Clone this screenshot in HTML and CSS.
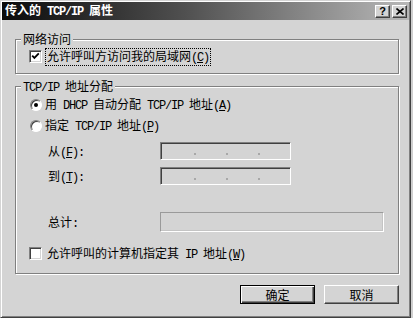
FILE: index.html
```html
<!DOCTYPE html>
<html>
<head>
    <title>传入的 TCP/IP 属性</title>
    <link rel="stylesheet" href="styles.css">
</head>
<body>
    <div class="window">
        <div class="titlebar">
            <span class="title">传入的<span class="m"> TCP/IP </span>属性</span>
            <div class="tbtns">
                <span class="tbtn">?</span>
                <span class="tbtn close">
                    <svg width="8" height="7" viewBox="0 0 8 7"><path d="M0.5 0.5 L7.5 6.5 M7.5 0.5 L0.5 6.5" stroke="#000" stroke-width="1.6"/></svg>
                </span>
            </div>
        </div>

        <div class="content">
            <div class="group" id="access">
                <span class="legend">网络访问</span>
                <div class="row">
                    <span class="check">
                        <svg width="9" height="9" viewBox="0 0 9 9"><path d="M1.2 3.6 L3.4 5.9 L7.8 1.4" stroke="#000" stroke-width="1.8" fill="none"/></svg>
                    </span>
                    <span class="label focus">允许呼叫方访问我的局域网<span class="m">(<u>C</u>)</span></span>
                </div>
            </div>

            <div class="group" id="assign">
                <span class="legend"><span class="m">TCP/IP </span>地址分配</span>
                <div class="row">
                    <span class="radio on"></span>
                    <span class="label">用<span class="m"> DHCP </span>自动分配<span class="m"> TCP/IP </span>地址<span class="m">(<u>A</u>)</span></span>
                </div>
                <div class="row" id="r2">
                    <span class="radio"></span>
                    <span class="label">指定<span class="m"> TCP/IP </span>地址<span class="m">(<u>P</u>)</span></span>
                </div>
                <div class="frow" id="from">
                    <span class="flabel">从<span class="m">(<u>F</u>):</span></span>
                    <div class="ip"><i></i><i></i><i></i></div>
                </div>
                <div class="frow" id="to">
                    <span class="flabel">到<span class="m">(<u>T</u>):</span></span>
                    <div class="ip"><i></i><i></i><i></i></div>
                </div>
                <div class="frow" id="total">
                    <span class="flabel">总计<span class="m">:</span></span>
                    <div class="sum"></div>
                </div>
                <div class="row" id="c2">
                    <span class="check"></span>
                    <span class="label">允许呼叫的计算机指定其<span class="m"> IP </span>地址<span class="m">(<u>W</u>)</span></span>
                </div>
            </div>

            <div class="buttons">
                <button class="btn default">确定</button>
                <button class="btn">取消</button>
            </div>
        </div>
    </div>
</body>
</html>
```

FILE: styles.css
```css
body {
    margin: 0;
    background-color: #cfcfcf;
    font-family: "Noto Sans CJK SC", sans-serif;
    font-size: 12px;
    color: #000;
}

/* half-width latin, like the dialog's bitmap font */
.m {
    font-family: "Liberation Mono", monospace;
    font-size: 12px;
    letter-spacing: -1.2px;
}

.window {
    width: 411px;
    height: 318px;
    box-sizing: border-box;
    background-color: #d4d4d4;
    border: 1px solid;
    border-color: #d4d4d4 #404040 #404040 #d4d4d4;
    box-shadow: inset 1px 1px #fff, inset -1px -1px #808080;
    padding: 1px;
    display: flex;
    flex-direction: column;
}

.titlebar {
    height: 18px;
    display: flex;
    align-items: center;
    justify-content: space-between;
    padding: 0 2px 0 3px;
    background: linear-gradient(to right, #0a0a0a, #505050 45%, #b8b8b8);
    color: #fff;
    font-weight: bold;
    line-height: 13px;
}

.title .m {
    font-weight: bold;
}

.tbtns {
    display: flex;
    gap: 2px;
}

.tbtn {
    width: 15px;
    height: 13px;
    box-sizing: border-box;
    background-color: #d4d4d4;
    border: 1px solid;
    border-color: #fff #404040 #404040 #fff;
    box-shadow: inset -1px -1px #808080;
    color: #000;
    font-family: "Liberation Sans", sans-serif;
    font-size: 11px;
    font-weight: bold;
    line-height: 11px;
    text-align: center;
    display: flex;
    align-items: center;
    justify-content: center;
}

.content {
    padding: 0 10px 0 13px;
    display: flex;
    flex-direction: column;
}

.group {
    position: relative;
    border: 1px solid #808080;
    box-shadow: inset 1px 1px #fff, 1px 1px #fff;
    padding-left: 13px;
}

.legend {
    position: absolute;
    top: -8px;
    left: 5px;
    padding: 0 2px;
    background-color: #d4d4d4;
    line-height: 14px;
}

#access {
    margin-top: 19px;
    padding-top: 10px;
    padding-bottom: 10px;
}

#assign {
    margin-top: 12px;
    padding-top: 11px;
    padding-bottom: 13px;
}

.row {
    display: flex;
    align-items: center;
    height: 13px;
    line-height: 13px;
}

#r2 {
    margin-top: 8px;
}

#c2 {
    margin-top: 15px;
}

.label {
    margin-left: 5px;
    white-space: nowrap;
}

.focus {
    outline: 1px dotted #000;
    outline-offset: 0;
    padding: 0 1px;
    margin-left: 4px;
}

.check {
    width: 13px;
    height: 13px;
    box-sizing: border-box;
    background-color: #fff;
    border: 1px solid;
    border-color: #808080 #fff #fff #808080;
    box-shadow: inset 1px 1px #404040, inset -1px -1px #d4d4d4;
    display: flex;
    align-items: center;
    justify-content: center;
}

.radio {
    position: relative;
    width: 12px;
    height: 12px;
    margin-left: 1px;
    box-sizing: border-box;
    border-radius: 50%;
    background-color: #fff;
    border: 1px solid;
    border-color: #808080 #fff #fff #808080;
    box-shadow: inset 1px 1px #404040;
}

.radio + .label {
    margin-left: 3px;
}

.radio.on::after {
    content: "";
    position: absolute;
    left: 3px;
    top: 3px;
    width: 4px;
    height: 4px;
    border-radius: 50%;
    background-color: #000;
}

.frow {
    display: flex;
    align-items: center;
}

#from {
    margin-top: 10px;
}

#to {
    margin-top: 7px;
}

#total {
    margin-top: 27px;
}

.flabel {
    width: 112px;
    margin-left: 19px;
}

.ip {
    width: 131px;
    height: 18px;
    box-sizing: border-box;
    border: 1px solid;
    border-color: #808080 #fff #fff #808080;
    box-shadow: inset 1px 1px #404040;
    display: flex;
    align-items: flex-end;
    gap: 30px;
    padding: 0 0 4px 33px;
}

.ip i {
    width: 2px;
    height: 2px;
    background-color: #a8a8a8;
}

.sum {
    width: 224px;
    height: 20px;
    box-sizing: border-box;
    border: 1px solid;
    border-color: #9a9a9a #fff #fff #9a9a9a;
    box-shadow: inset -1px -1px #c4c4c4;
}

.buttons {
    display: flex;
    justify-content: flex-end;
    gap: 9px;
    margin-top: 11px;
}

.btn {
    width: 75px;
    height: 19px;
    padding: 0;
    box-sizing: border-box;
    background-color: #d4d4d4;
    border: 1px solid;
    border-color: #fff #404040 #404040 #fff;
    box-shadow: inset -1px -1px #808080;
    font-family: "Noto Sans CJK SC", sans-serif;
    font-size: 12px;
    line-height: 15px;
    color: #000;
}

.btn.default {
    border: 1px solid #000;
    box-shadow: inset 1px 1px #fff, inset -1px -1px #404040, inset -2px -2px #808080;
}
```
